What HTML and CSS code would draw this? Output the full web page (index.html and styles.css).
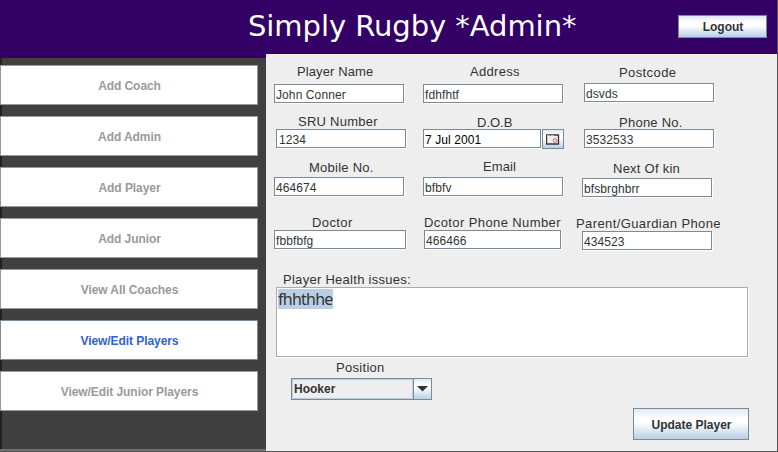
FILE: index.html
```html
<!DOCTYPE html>
<html lang="en">
<head>
<meta charset="utf-8">
<title>Simply Rugby Admin</title>
<link rel="stylesheet" href="styles.css">
</head>
<body>
<div class="window">
  <header class="header">
    <h1 class="title">Simply Rugby *Admin*</h1>
    <button class="btn logout">Logout</button>
  </header>
  <div class="body">
    <nav class="sidebar">
      <button class="nav">Add Coach</button>
      <button class="nav">Add Admin</button>
      <button class="nav">Add Player</button>
      <button class="nav">Add Junior</button>
      <button class="nav">View All Coaches</button>
      <button class="nav active">View/Edit Players</button>
      <button class="nav">View/Edit Junior Players</button>
    </nav>
    <main class="main">
      <div class="fields">
        <div class="column">
          <div class="field player-name"><label>Player Name</label><div class="input">John Conner</div></div>
          <div class="field sru"><label>SRU Number</label><div class="input">1234</div></div>
          <div class="field mobile"><label>Mobile No.</label><div class="input">464674</div></div>
          <div class="field doctor"><label>Doctor</label><div class="input">fbbfbfg</div></div>
        </div>
        <div class="column second">
          <div class="field address"><label>Address</label><div class="input">fdhfhtf</div></div>
          <div class="field dob"><label>D.O.B</label>
            <div class="date"><div class="input">7 Jul 2001</div>
              <button class="btn calendar" aria-label="Pick date"><svg width="14" height="11" viewBox="0 0 14 11"><path d="M.5 1h12v9H.5z" fill="#eee" stroke="#333" stroke-width="1.300"/><path d="M1 1.500h3M5 1.500h3" stroke="#d9b872"/><circle cx="9" cy="6.500" r="1.800" fill="#fff" stroke="#e2504c"/></svg></button>
            </div></div>
          <div class="field email"><label>Email</label><div class="input">bfbfv</div></div>
          <div class="field doctor-phone"><label>Dcotor Phone Number</label><div class="input">466466</div></div>
        </div>
        <div class="column third">
          <div class="field postcode"><label>Postcode</label><div class="input">dsvds</div></div>
          <div class="field phone"><label>Phone No.</label><div class="input">3532533</div></div>
          <div class="field kin"><label>Next Of kin</label><div class="input">bfsbrghbrr</div></div>
          <div class="field guardian"><label>Parent/Guardian Phone</label><div class="input">434523</div></div>
        </div>
      </div>
      <label class="health-label">Player Health issues:</label>
      <div class="health"><span class="selected">fhhthhe</span></div>
      <label class="position-label">Position</label>
      <div class="select"><span class="value">Hooker</span><span class="arrow"><svg width="11" height="6" viewBox="0 0 11 6"><path d="M0 0h11L5.500 5.500z" fill="#333"/></svg></span></div>
      <button class="btn update">Update Player</button>
    </main>
  </div>
</div>
</body>
</html>
```
FILE: styles.css
```css
* { box-sizing: border-box; }
body { margin: 0; font: 12px "Liberation Sans", Arial, sans-serif; color: #333; }
button { font: inherit; font-weight: bold; color: #333; padding: 0; margin: 0; border-radius: 0; }
.window { width: 778px; height: 452px; background: #306; border-right: 1px solid #555; border-bottom: 1px solid #555; overflow: hidden; }
.header { height: 54px; display: flex; align-items: flex-start; }
.title { margin: 9px 0 0 248px; width: 430px; font: 29px/35px "DejaVu Sans", sans-serif; letter-spacing: -.05px; color: #fff; white-space: nowrap; }
.btn { border: 1px solid #7a8a99; background: linear-gradient(#dde8f3 0%, #fff 30%, #fff 45%, #b8cfe5 100%); }
.logout { width: 89px; height: 23px; margin-top: 15px; padding-left: 1px; }
.body { display: flex; height: 397px; }
.sidebar { width: 266px; margin-top: 4px; height: 393px; padding-top: 7px; display: flex; flex-direction: column; gap: 11px; background: #404040; border-bottom: 2px solid #707070; box-shadow: inset 2px 0 #222; }
.nav { width: 258px; height: 40px; flex: none; padding: 1px 0 0 1px; border: 1px solid #999; background: #fff; color: #999; letter-spacing: -.07px; }
.active { color: #2e62ce; border-color: #7a8a99; }
.main { width: 511px; background: #eee; display: flex; flex-direction: column; align-items: flex-start; }
.fields { display: flex; height: 216px; padding-left: 8px; flex: none; }
.column { width: 149px; }
.column.second { width: 151px; }
.column.third { width: 150px; }
label { display: block; font-size: 13px; line-height: 18px; height: 16px; letter-spacing: .4px; white-space: nowrap; }
.input { width: 130px; height: 19px; padding-left: 1px; line-height: 20px; border: 1px solid #7a8a99; background: #fff; box-shadow: 1px 1px #fff; white-space: nowrap; letter-spacing: .1px; }
.date { display: flex; gap: 1px; }
.date .input { color: #000; }
.calendar { width: 22px; height: 20px; display: flex; align-items: center; justify-content: center; }

.player-name { margin-top: 9px; }
.player-name label { margin: 0 0 5px 23px; letter-spacing: .1px; }
.sru { margin-top: 10px; }
.sru label { margin-left: 24px; letter-spacing: .25px; }
.sru .input { margin-left: 2px; padding-left: 2px; }
.mobile { margin-top: 11px; }
.mobile label { margin: 0 0 2px 35px; letter-spacing: .25px; }
.doctor { margin-top: 18px; }
.doctor label { margin-left: 38px; }
.doctor .input { width: 132px; }

.address { margin-top: 9px; }
.address label { margin: 0 0 5px 47px; letter-spacing: .3px; }
.dob { margin-top: 11px; }
.dob label { margin: 0 0 -1px 54px; letter-spacing: 0; }
.email { margin-top: 9px; }
.email label { margin: 0 0 3px 60px; letter-spacing: .1px; }
.doctor-phone { margin-top: 18px; }
.doctor-phone label { margin-left: 1px; }
.doctor-phone .input { margin-left: 1px; width: 137px; }
.address .input, .email .input { width: 140px; }
.dob .input { width: 118px; }

.postcode { margin-top: 10px; }
.postcode label { margin: 0 0 3px 45px; }
.phone { margin-top: 12px; }
.phone label { margin: 0 0 -1px 45px; letter-spacing: .25px; }
.postcode .input, .phone .input { margin-left: 10px; }
.kin { margin-top: 12px; }
.kin label { margin: 0 0 2px 39px; letter-spacing: .25px; }
.guardian { margin-top: 18px; }
.guardian label { margin-left: 2px; }
.kin .input, .guardian .input { margin-left: 8px; }

.health-label { margin: 1px 0 0 17px; letter-spacing: .28px; }
.health { width: 472px; height: 70px; margin-left: 10px; padding: 1px; flex: none; border: 1px solid #aaa; background: #fff; box-shadow: 1px 1px #fff; }
.selected { display: block; width: 55px; height: 20px; background: #b8cfe5; font: 16px/20px "Noto Sans", sans-serif; letter-spacing: -.75px; }
.position-label { margin: 2px 0 3px 70px; letter-spacing: .3px; }
.select { display: flex; width: 141px; height: 22px; margin-left: 25px; border: 1px solid #7a8a99; flex: none; }
.value { width: 121px; padding-left: 1px; border: 1px solid #b8cfe5; font-weight: bold; line-height: 18px; }
.arrow { flex: 1; display: flex; align-items: center; justify-content: center; border-left: 1px solid #7a8a99; background: linear-gradient(#dde8f3, #fff 30%, #fff 45%, #b8cfe5); }
.update { width: 116px; height: 32px; margin: 8px 0 0 367px; padding: 1px 0 0 1px; flex: none; }
```
